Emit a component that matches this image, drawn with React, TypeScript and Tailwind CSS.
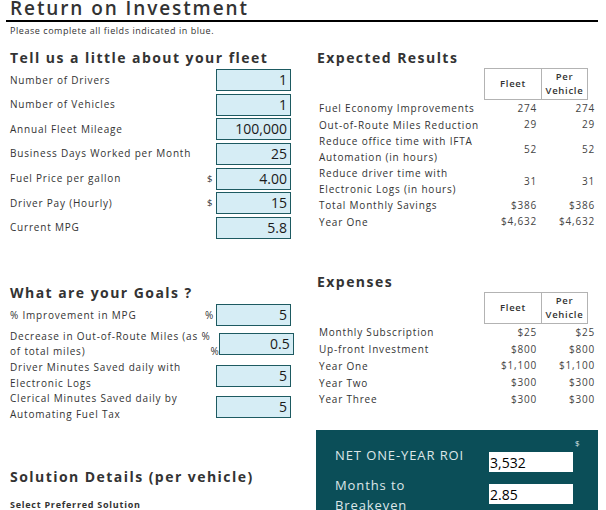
import React from "react";

const LBL = "text-[10px] tracking-[0.8px] text-[#333]";
const H2 = "text-[14px] font-bold tracking-[1.45px] text-[#333]";

function Box({ v }: { v: string }) {
  return (
    <div className="w-[75px] h-[22px] shrink-0 border-[1.5px] border-[#1d5a61] bg-[#d6edf5] text-right pr-[3px] text-[14px] leading-[19px] text-[#1a1a1a]">
      {v}
    </div>
  );
}

function FleetRow({ label, v, pre }: { label: string; v: string; pre?: string }) {
  return (
    <div className="flex items-center h-[22px] mb-[2.67px]">
      <div className={`flex-1 ${LBL}`}>{label}</div>
      <div className="w-[10px] text-[9.5px] text-[#333] pl-[1px]">{pre ?? ""}</div>
      <Box v={v} />
    </div>
  );
}

function GoalRow({
  label,
  v,
  pre,
  h,
  mt,
  preEnd,
}: {
  label: React.ReactNode;
  v: string;
  pre?: string;
  h: string;
  mt: string;
  preEnd?: boolean;
}) {
  return (
    <div className={`flex items-center ${h} ${mt}`}>
      <div className={`flex-1 whitespace-nowrap leading-[15.5px] ${LBL}`}>{label}</div>
      <div
        className={`w-[11px] text-[10px] text-[#333] leading-[15px] ${preEnd ? "self-end" : ""}`}
      >
        {pre ?? ""}
      </div>
      <Box v={v} />
    </div>
  );
}

function Header({ h }: { h: string }) {
  return (
    <div className="flex">
      <div className="w-[167px]" />
      <div className={`flex ${h} border border-[#b3b3b3] text-[9.5px] font-semibold tracking-[0.7px] text-[#333]`}>
        <div className="w-[57px] border-r border-[#b3b3b3] flex items-center justify-center">Fleet</div>
        <div className="w-[45px] flex flex-col items-center justify-center leading-[14px]">
          <span>Per</span>
          <span>Vehicle</span>
        </div>
      </div>
    </div>
  );
}

function ResRow({ label, a, b, h }: { label: React.ReactNode; a: string; b: string; h: string }) {
  return (
    <div className={`flex items-center ${h}`}>
      <div className={`w-[167px] pl-[2px] leading-[16px] ${LBL}`}>{label}</div>
      <div className={`w-[58px] text-right pr-[5px] ${LBL} text-[#444]`}>{a}</div>
      <div className={`w-[56px] text-right pr-[3px] ${LBL} text-[#444]`}>{b}</div>
    </div>
  );
}

export default function App() {
  return (
    <div className="w-[606px] h-[510px] overflow-hidden bg-white font-['Open_Sans',sans-serif] text-[#333]">
      <div className="pl-[10px] h-[20px] text-[19px] leading-[17px] font-semibold tracking-[1.9px] text-[#333]">
        Return on Investment
      </div>
      <div className="ml-[6px] mr-[8px] h-[2px] bg-black" />
      <div className="pl-[10px] pt-[3px] h-[23px] text-[9px] leading-[12px] tracking-[0.55px] text-[#333]">
        Please complete all fields indicated in blue.
      </div>
      <div className="flex">
        {/* Left column */}
        <div className="w-[291px] pl-[10px] shrink-0">
          <div className={`h-[24px] pt-[2px] leading-[22px] ${H2}`}>Tell us a little about your fleet</div>
          <FleetRow label="Number of Drivers" v="1" />
          <FleetRow label="Number of Vehicles" v="1" />
          <FleetRow label="Annual Fleet Mileage" v="100,000" />
          <FleetRow label="Business Days Worked per Month" v="25" />
          <FleetRow label="Fuel Price per gallon" v="4.00" pre="$" />
          <FleetRow label="Driver Pay (Hourly)" v="15" pre="$" />
          <FleetRow label="Current MPG" v="5.8" />

          <div className={`mt-[43px] h-[22px] pt-[1.5px] leading-[20.5px] ${H2}`}>What are your Goals ?</div>
          <GoalRow label="% Improvement in MPG" v="5" pre="%" h="h-[23px]" mt="mt-0" />
          <GoalRow
            label={
              <>
                Decrease in Out-of-Route Miles (as %<br />
                of total miles)
              </>
            }
            v="0.5"
            pre="%"
            h="h-[30px]"
            mt="mt-[2.5px]"
            preEnd
          />
          <GoalRow
            label={
              <>
                Driver Minutes Saved daily with
                <br />
                Electronic Logs
              </>
            }
            v="5"
            h="h-[30px]"
            mt="mt-[1.5px]"
          />
          <GoalRow
            label={
              <>
                Clerical Minutes Saved daily by
                <br />
                Automating Fuel Tax
              </>
            }
            v="5"
            h="h-[30px]"
            mt="mt-[1px]"
          />

          <div className={`mt-[44px] h-[22px] leading-[22px] ${H2}`}>Solution Details (per vehicle)</div>
          <div className="mt-[11px] text-[9px] leading-[12px] font-bold tracking-[0.75px]">
            Select Preferred Solution
          </div>
        </div>

        {/* Right column */}
        <div className="w-[281px] ml-[26px] shrink-0">
          <div className={`h-[23px] pt-[2px] leading-[21px] ${H2}`}>Expected Results</div>
          <Header h="h-[32px]" />
          <ResRow label="Fuel Economy Improvements" a="274" b="274" h="h-[16.5px]" />
          <ResRow label="Out-of-Route Miles Reduction" a="29" b="29" h="h-[16.5px]" />
          <ResRow
            label={
              <>
                Reduce office time with IFTA
                <br />
                Automation (in hours)
              </>
            }
            a="52"
            b="52"
            h="h-[32px]"
          />
          <ResRow
            label={
              <>
                Reduce driver time with
                <br />
                Electronic Logs (in hours)
              </>
            }
            a="31"
            b="31"
            h="h-[32px]"
          />
          <ResRow label="Total Monthly Savings" a="$386" b="$386" h="h-[16.5px]" />
          <ResRow label="Year One" a="$4,632" b="$4,632" h="h-[16.5px]" />

          <div className={`mt-[39px] h-[23px] pt-[2px] leading-[21px] ${H2}`}>Expenses</div>
          <Header h="h-[32px]" />
          <ResRow label="Monthly Subscription" a="$25" b="$25" h="h-[16.75px]" />
          <ResRow label="Up-front Investment" a="$800" b="$800" h="h-[16.75px]" />
          <ResRow label="Year One" a="$1,100" b="$1,100" h="h-[16.75px]" />
          <ResRow label="Year Two" a="$300" b="$300" h="h-[16.75px]" />
          <ResRow label="Year Three" a="$300" b="$300" h="h-[16.75px]" />

          <div className="mt-[22px] -ml-[1px] w-[282px] h-[120px] bg-[#0b4e58] flex">
            <div className="w-[173px] pl-[19px] pt-[15px] text-[13px] leading-[20px] tracking-[0.9px] text-[#dde6e8]">
              <div>NET ONE-YEAR ROI</div>
              <div className="mt-[10.7px]">
                Months to
                <br />
                Breakeven
              </div>
            </div>
            <div className="flex flex-col">
              <div className="pt-[8px] h-[22px] pl-[86px] text-[8px] leading-[10px] text-[#dde6e8]">$</div>
              <div className="w-[84px] h-[20px] bg-white pl-[1px] text-[14px] leading-[22px] text-black">3,532</div>
              <div className="mt-[12px] w-[84px] h-[20px] bg-white pl-[1px] text-[14px] leading-[22px] text-black">2.85</div>
            </div>
          </div>
        </div>
      </div>
    </div>
  );
}
